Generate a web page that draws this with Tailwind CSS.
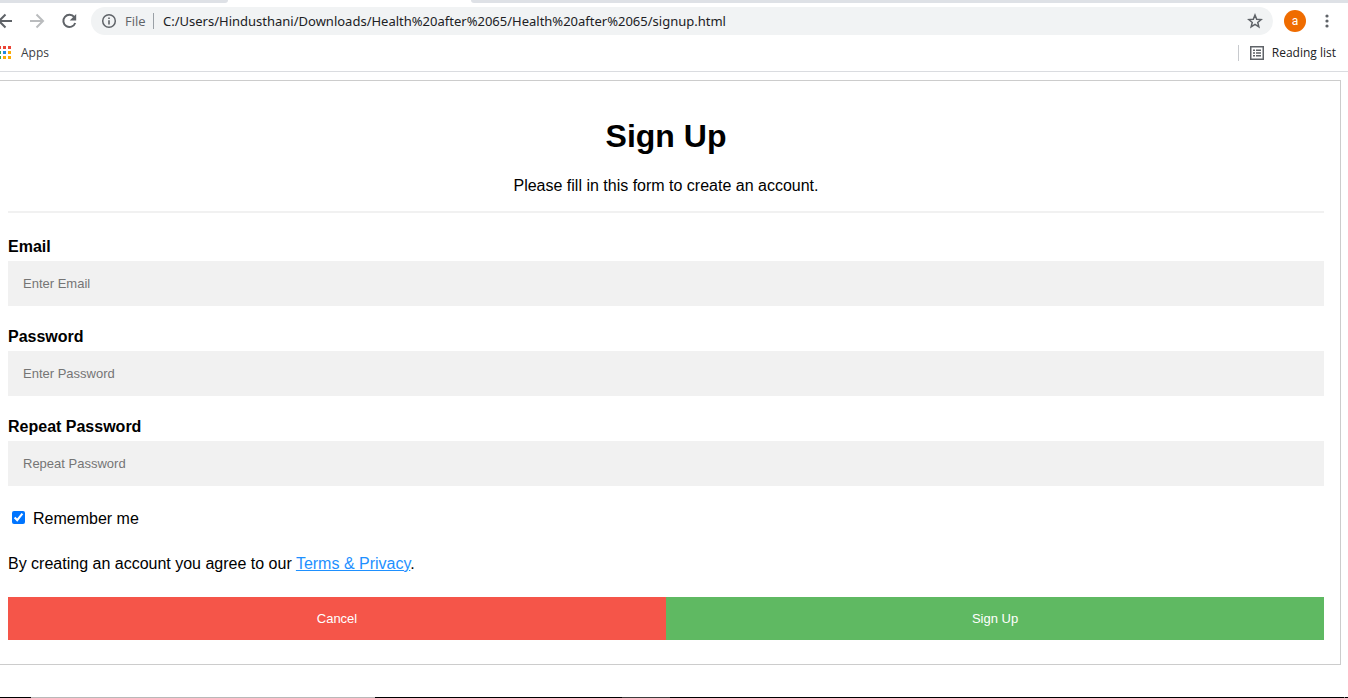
<!DOCTYPE html>
<html lang="en">
<head>
<meta charset="utf-8">
<meta name="viewport" content="width=device-width, initial-scale=1">
<title>Sign Up</title>
<script src="https://cdn.jsdelivr.net/npm/@tailwindcss/browser@4"></script>
</head>
<body class="flex min-h-screen flex-col overflow-x-hidden bg-white font-['Liberation_Sans',Arial,sans-serif] text-base text-black">

<header class="border-b border-[#dadce0] font-['Open_Sans','Noto_Sans',sans-serif] text-[#3c4043]">
  <!-- Lower edge of the tab strip -->
  <div class="flex h-[3px]">
    <div class="w-[228px] rounded-br-sm bg-[#dee1e6]"></div>
    <div class="w-[243px]"></div>
    <div class="flex-1 rounded-bl-sm bg-[#dee1e6]"></div>
  </div>

  <!-- Toolbar -->
  <div class="flex h-9 items-center">
    <button type="button" aria-label="Back" class="-ml-1 h-4 w-4">
      <svg viewBox="0 0 16 16" class="h-4 w-4" fill="none" stroke="#5f6368" stroke-width="2"><path d="M16 8H3M9.500 1.500 3 8l6.500 6.500"/></svg>
    </button>
    <button type="button" aria-label="Forward" class="ml-[17px] h-4 w-4">
      <svg viewBox="0 0 16 16" class="h-4 w-4" fill="none" stroke="#babcbe" stroke-width="2"><path d="M1 8h13M7.500 1.500 14 8l-6.500 6.500"/></svg>
    </button>
    <button type="button" aria-label="Reload" class="ml-4 h-4 w-4">
      <svg viewBox="0 0 16 16" class="h-4 w-4"><path d="M13.300 4.200A6.100 6.100 0 1 0 14.200 10" fill="none" stroke="#5f6368" stroke-width="2"/><path d="M15.200 1v6.500H8.700z" fill="#5f6368"/></svg>
    </button>
    <div class="ml-[14px] flex h-7 flex-1 items-center rounded-full bg-[#f1f3f4] px-[10px]">
      <svg viewBox="0 0 16 16" class="h-4 w-4 shrink-0"><circle cx="8" cy="8" r="6.300" fill="none" stroke="#5f6368" stroke-width="1.500"/><path d="M7.200 7.200h1.600v4.300H7.200zM7.200 4.500h1.600V6H7.200z" fill="#5f6368"/></svg>
      <span class="ml-2 w-7 text-[13px] leading-5 text-[#5f6368]">File</span>
      <span class="h-4 w-px bg-[#9aa0a6]"></span>
      <input aria-label="Address" type="text" value="C:/Users/Hindusthani/Downloads/Health%20after%2065/Health%20after%2065/signup.html" class="ml-[9px] h-5 min-w-0 flex-1 bg-transparent font-['Noto_Sans',sans-serif] text-[13px] text-[#202124] outline-none">
      <button type="button" aria-label="Bookmark this page" class="h-4 w-4">
        <svg viewBox="0 0 16 16" class="h-4 w-4" fill="none" stroke="#5f6368" stroke-width="1.500"><path d="m8 2 1.700 4.200 4.500.35-3.450 2.900 1.100 4.400L8 11.450l-3.850 2.400 1.100-4.400L1.800 6.550l4.500-.35z"/></svg>
      </button>
    </div>
    <button type="button" aria-label="Profile" class="ml-[11px] flex h-[22px] w-[22px] items-center justify-center rounded-full bg-[#ef6c00] font-['Roboto',sans-serif] text-xs text-white">a</button>
    <button type="button" aria-label="Menu" class="mr-[13px] ml-[13px] h-4 w-4">
      <svg viewBox="0 0 16 16" class="h-4 w-4" fill="#5f6368"><circle cx="8" cy="3" r="1.600"/><circle cx="8" cy="8" r="1.600"/><circle cx="8" cy="13" r="1.600"/></svg>
    </button>
  </div>

  <!-- Bookmarks bar -->
  <div class="flex h-8 items-start pt-1 text-xs leading-5">
    <button type="button" class="flex h-5 items-start">
      <svg viewBox="0 0 11 13" class="mt-[3px] mr-[10px] h-[13px] w-[11px]"><path fill="#ea4335" d="M-2 0h3v3h-3zM3 0h3v3H3zM8 0h3v3H8z"/><path fill="#34a853" d="M-2 5h3v3h-3zM-2 10h3v3h-3z"/><path fill="#1e88e5" d="M3 5h3v3H3z"/><path fill="#fbab04" d="M8 5h3v3H8zM3 10h3v3H3zM8 10h3v3H8z"/></svg>
      Apps
    </button>
    <span class="mt-[2px] ml-auto h-4 w-px bg-[#c8cace]"></span>
    <button type="button" class="mr-3 ml-[11px] flex h-5 items-center text-[#202124]">
      <svg viewBox="0 0 14 14" class="mr-2 h-[14px] w-[14px]"><path d="M.75.75h12.500v12.500H.75z" fill="none" stroke="#5f6368" stroke-width="1.500"/><path fill="#5f6368" d="M3 3.500h2V5H3zM6 3.500h5V5H6zM3 6.300h2v1.500H3zM6 6.300h5v1.500H6zM3 9h2v1.500H3zM6 9h5v1.500H6z"/></svg>
      Reading list
    </button>
  </div>
</header>

<main class="mt-2 mr-[7px]">
  <form class="border border-l-0 border-[#cccccc] pt-[37px] pr-4 pb-6 pl-2 leading-[18px]">
    <h1 class="text-center text-[32px] leading-[37px] font-bold">Sign Up</h1>
    <p class="mt-[22px] text-center">Please fill in this form to create an account.</p>
    <hr class="mt-4 mb-[25px] border-0 border-t-2 border-[#f1f1f1]">

    <label for="email" class="block font-bold">Email</label>
    <input id="email" type="text" placeholder="Enter Email" class="mt-[5px] mb-[22px] block h-[45px] w-full bg-[#f1f1f1] px-[15px] text-[13px] outline-none placeholder:text-[#757575]">

    <label for="psw" class="block font-bold">Password</label>
    <input id="psw" type="password" placeholder="Enter Password" class="mt-[5px] mb-[22px] block h-[45px] w-full bg-[#f1f1f1] px-[15px] text-[13px] outline-none placeholder:text-[#757575]">

    <label for="psw-repeat" class="block font-bold">Repeat Password</label>
    <input id="psw-repeat" type="password" placeholder="Repeat Password" class="mt-[5px] mb-6 block h-[45px] w-full bg-[#f1f1f1] px-[15px] text-[13px] outline-none placeholder:text-[#757575]">

    <label class="flex items-start gap-2"><input type="checkbox" checked class="mt-px ml-1 h-[13px] w-[13px]">Remember me</label>

    <p class="mt-[27px]">By creating an account you agree to our <a href="#" class="text-[#1e90ff] underline">Terms &amp; Privacy</a>.</p>

    <div class="mt-6 flex text-[13px] text-white">
      <button type="button" class="h-[43px] flex-1 bg-[#f55549]">Cancel</button>
      <button type="submit" class="h-[43px] flex-1 bg-[#5fb962]">Sign Up</button>
    </div>
  </form>
</main>

<!-- Upper edge of the taskbar -->
<div class="mt-auto flex h-px bg-black">
  <div class="ml-[31px] w-[344px] bg-[#b8b8b8]"></div>
  <div class="ml-[247px] w-12 bg-[#3c3c3c]"></div>
  <div class="mr-[3px] ml-auto w-px bg-[#808080]"></div>
</div>
</body>
</html>
